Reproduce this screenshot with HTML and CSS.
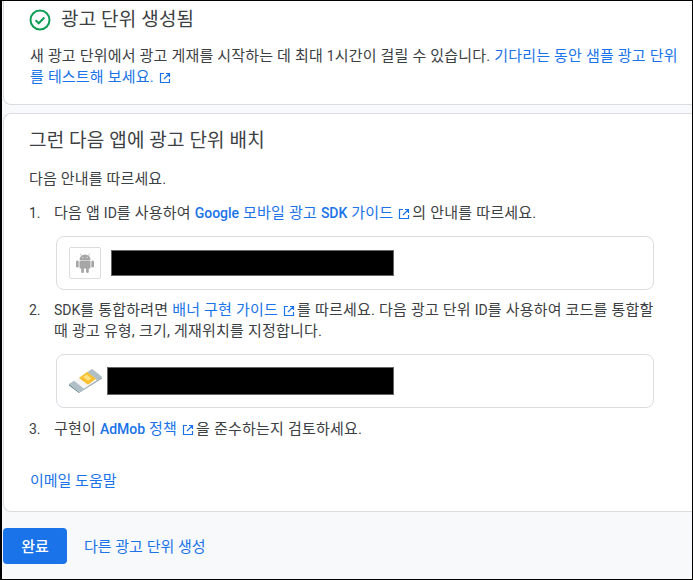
FILE: index.html
```html
<!DOCTYPE html>
<html lang="ko">
<head>
<meta charset="utf-8">
<title>광고 단위 생성됨</title>
<link rel="stylesheet" href="styles.css">
</head>
<body>
<div class="frame">
  <section class="card card-top">
    <div class="status">
      <svg class="check" width="22" height="22" viewBox="0 0 22 22"><circle cx="11" cy="11" r="9.500" fill="none" stroke="#0f9d58" stroke-width="2"/><path d="M6.600 11.300l3.100 3 5.700-5.800" fill="none" stroke="#0f9d58" stroke-width="2"/></svg>
      <h2 class="status-title">광고 단위 생성됨</h2>
    </div>
    <p class="intro">새 광고 단위에서 광고 게재를 시작하는 데 최대 <span class="latin">1</span>시간이 걸릴 수 있습니다. <a class="link">기다리는 동안 샘플 광고 단위를 테스트해 보세요.<svg class="ext" width="12" height="12" viewBox="0 0 12 12"><path d="M5 1.500H1.500v9h9V7M7 1.500h3.500V5M10.500 1.500L5 7" fill="none" stroke="#1a73e8" stroke-width="1.200"/></svg></a></p>
  </section>
  <section class="card card-main">
    <h2 class="main-title">그런 다음 앱에 광고 단위 배치</h2>
    <p class="lead">다음 안내를 따르세요.</p>
    <ol class="steps">
      <li class="step">
        <div class="step-row"><span class="num latin">1.</span><span class="step-text">다음 앱 <span class="latin">ID</span>를 사용하여 <a class="link latin strong">Google</a> <a class="link">모바일 광고</a> <a class="link latin strong">SDK</a> <a class="link">가이드<svg class="ext" width="12" height="12" viewBox="0 0 12 12"><path d="M5 1.500H1.500v9h9V7M7 1.500h3.500V5M10.500 1.500L5 7" fill="none" stroke="#1a73e8" stroke-width="1.200"/></svg></a>의 안내를 따르세요.</span></div>
        <div class="id-box">
          <span class="app-icon"><svg width="18" height="20" viewBox="0 0 18 20"><g fill="#a6a6a6"><path d="M3.500 7a5.500 5.500 0 0 1 11 0z"/><rect x="3.500" y="7.600" width="11" height="8" rx="1"/><rect x="0" y="7.600" width="2.700" height="7" rx="1.300"/><rect x="15.300" y="7.600" width="2.700" height="7" rx="1.300"/><rect x="5.200" y="14" width="2.700" height="6" rx="1.300"/><rect x="10.100" y="14" width="2.700" height="6" rx="1.300"/></g><path d="M5.500 2.800L4.300.6M12.500 2.800L13.700.6" stroke="#a6a6a6" stroke-width=".7"/><circle cx="6.800" cy="4.500" r=".6" fill="#fff"/><circle cx="11.200" cy="4.500" r=".6" fill="#fff"/></svg></span>
          <span class="redact redact-app"></span>
        </div>
      </li>
      <li class="step">
        <div class="step-row"><span class="num latin">2.</span><span class="step-text"><span class="latin">SDK</span>를 통합하려면 <a class="link">배너 구현 가이드<svg class="ext" width="12" height="12" viewBox="0 0 12 12"><path d="M5 1.500H1.500v9h9V7M7 1.500h3.500V5M10.500 1.500L5 7" fill="none" stroke="#1a73e8" stroke-width="1.200"/></svg></a>를 따르세요. 다음 광고 단위 <span class="latin">ID</span>를 사용하여 코드를 통합할 때 광고 유형, 크기, 게재위치를 지정합니다.</span></div>
        <div class="id-box id-box-unit">
          <svg class="unit-icon" width="33" height="24" viewBox="0 0 33 24"><path d="M0 15L23 0l10 8-23 15z" fill="#f5f5f5"/><path d="M0 15l10 8v1L0 16.500z" fill="#607d8b"/><path d="M10 23L33 8v1.500L10 24z" fill="#90a4ae"/><path d="M0 15l5-3.300 10 8L10 23z" fill="#b0bec5"/><path d="M28 3.700L33 8l-5 3.300-10-8L23 0z" fill="#b0bec5"/><path d="M10 9l8-6 9 6.800-8 6z" fill="#fbc02d"/><path d="M14 8l3.500-2.500 5 3.800-3.500 2.500z" fill="#ffe082"/></svg>
          <span class="redact redact-unit"></span>
        </div>
      </li>
      <li class="step step-last">
        <div class="step-row"><span class="num latin">3.</span><span class="step-text">구현이 <a class="link latin strong">AdMob</a> <a class="link">정책<svg class="ext" width="12" height="12" viewBox="0 0 12 12"><path d="M5 1.500H1.500v9h9V7M7 1.500h3.500V5M10.500 1.500L5 7" fill="none" stroke="#1a73e8" stroke-width="1.200"/></svg></a>을 준수하는지 검토하세요.</span></div>
      </li>
    </ol>
    <a class="link email">이메일 도움말</a>
  </section>
  <footer class="actions">
    <button class="done" type="button">완료</button>
    <a class="link another">다른 광고 단위 생성</a>
  </footer>
</div>
</body>
</html>
```
FILE: styles.css
```css
html, body { margin: 0; padding: 0; }
body { width: 693px; height: 580px; overflow: hidden; background: #000; font-family: Roboto, "Noto Sans CJK KR", sans-serif; font-size: 15px; letter-spacing: 0.2px; line-height: 21px; color: #3c4043; }
.latin { font-size: 14px; letter-spacing: 0; }
.frame { box-sizing: border-box; width: 693px; height: 580px; margin: 0; border: 1px solid #000; border-left-width: 2px; background: #f8f9fa; overflow: hidden; display: flex; flex-direction: column; }
.card { background: #fff; border: 1px solid #dadce0; margin-left: 1px; border-right: 0; }
.card-top { height: 104px; box-sizing: border-box; border-top: 0; border-radius: 0 0 0 8px; padding: 7px 0 0 25px; }
.status { display: flex; align-items: center; gap: 10px; height: 24px; }
.check { flex: none; }
.status-title { margin: 0; font-size: 19px; font-weight: 400; line-height: 24px; letter-spacing: 0.15px; }
.intro { margin: 14px 10px 0 1px; letter-spacing: 0.18px; }
.link { color: #1a73e8; text-decoration: none; }
.strong { font-weight: 500; }
.ext { margin: 0 2px 0 5px; vertical-align: -2px; }
.card-main { margin-top: 8px; height: 399px; box-sizing: border-box; border-radius: 8px 0 0 8px; padding: 15px 0 0 25px; }
.main-title { margin: 0; font-size: 19px; font-weight: 400; line-height: 24px; letter-spacing: 0.15px; }
.lead { margin: 16px 0 0; letter-spacing: 0.15px; }
.steps { list-style: none; margin: 13px 0 0; padding: 0; }
.step { margin-bottom: 10px; }
.step-last { margin-top: 11px; margin-bottom: 0; }
.step-row { display: flex; }
.num { flex: none; width: 25px; }
.step-text { width: 604px; }
.id-box { box-sizing: border-box; width: 598px; height: 54px; margin: 12px 0 0 27px; border: 1px solid #dadce0; border-radius: 8px; display: flex; align-items: center; padding-left: 12px; }
.app-icon { box-sizing: border-box; width: 32px; height: 32px; border: 1px solid #dadce0; border-radius: 2px; display: flex; align-items: center; justify-content: center; }
.unit-icon { flex: none; }
.redact { background: #000; box-sizing: border-box; border: 1px solid #666; }
.redact-app { width: 283px; height: 26px; margin-left: 10px; }
.redact-unit { width: 287px; height: 28px; margin-left: 5px; }
.email { display: block; margin: 31px 0 0 1px; letter-spacing: 0; }
.actions { display: flex; align-items: center; flex: 1; padding-left: 1px; }
.done { width: 64px; height: 36px; padding: 3px 0 0; border: 0; border-radius: 4px; background: #1a73e8; color: #fff; font: inherit; font-weight: 500; }
.another { margin-left: 17px; padding-top: 3px; letter-spacing: 0; }
```
